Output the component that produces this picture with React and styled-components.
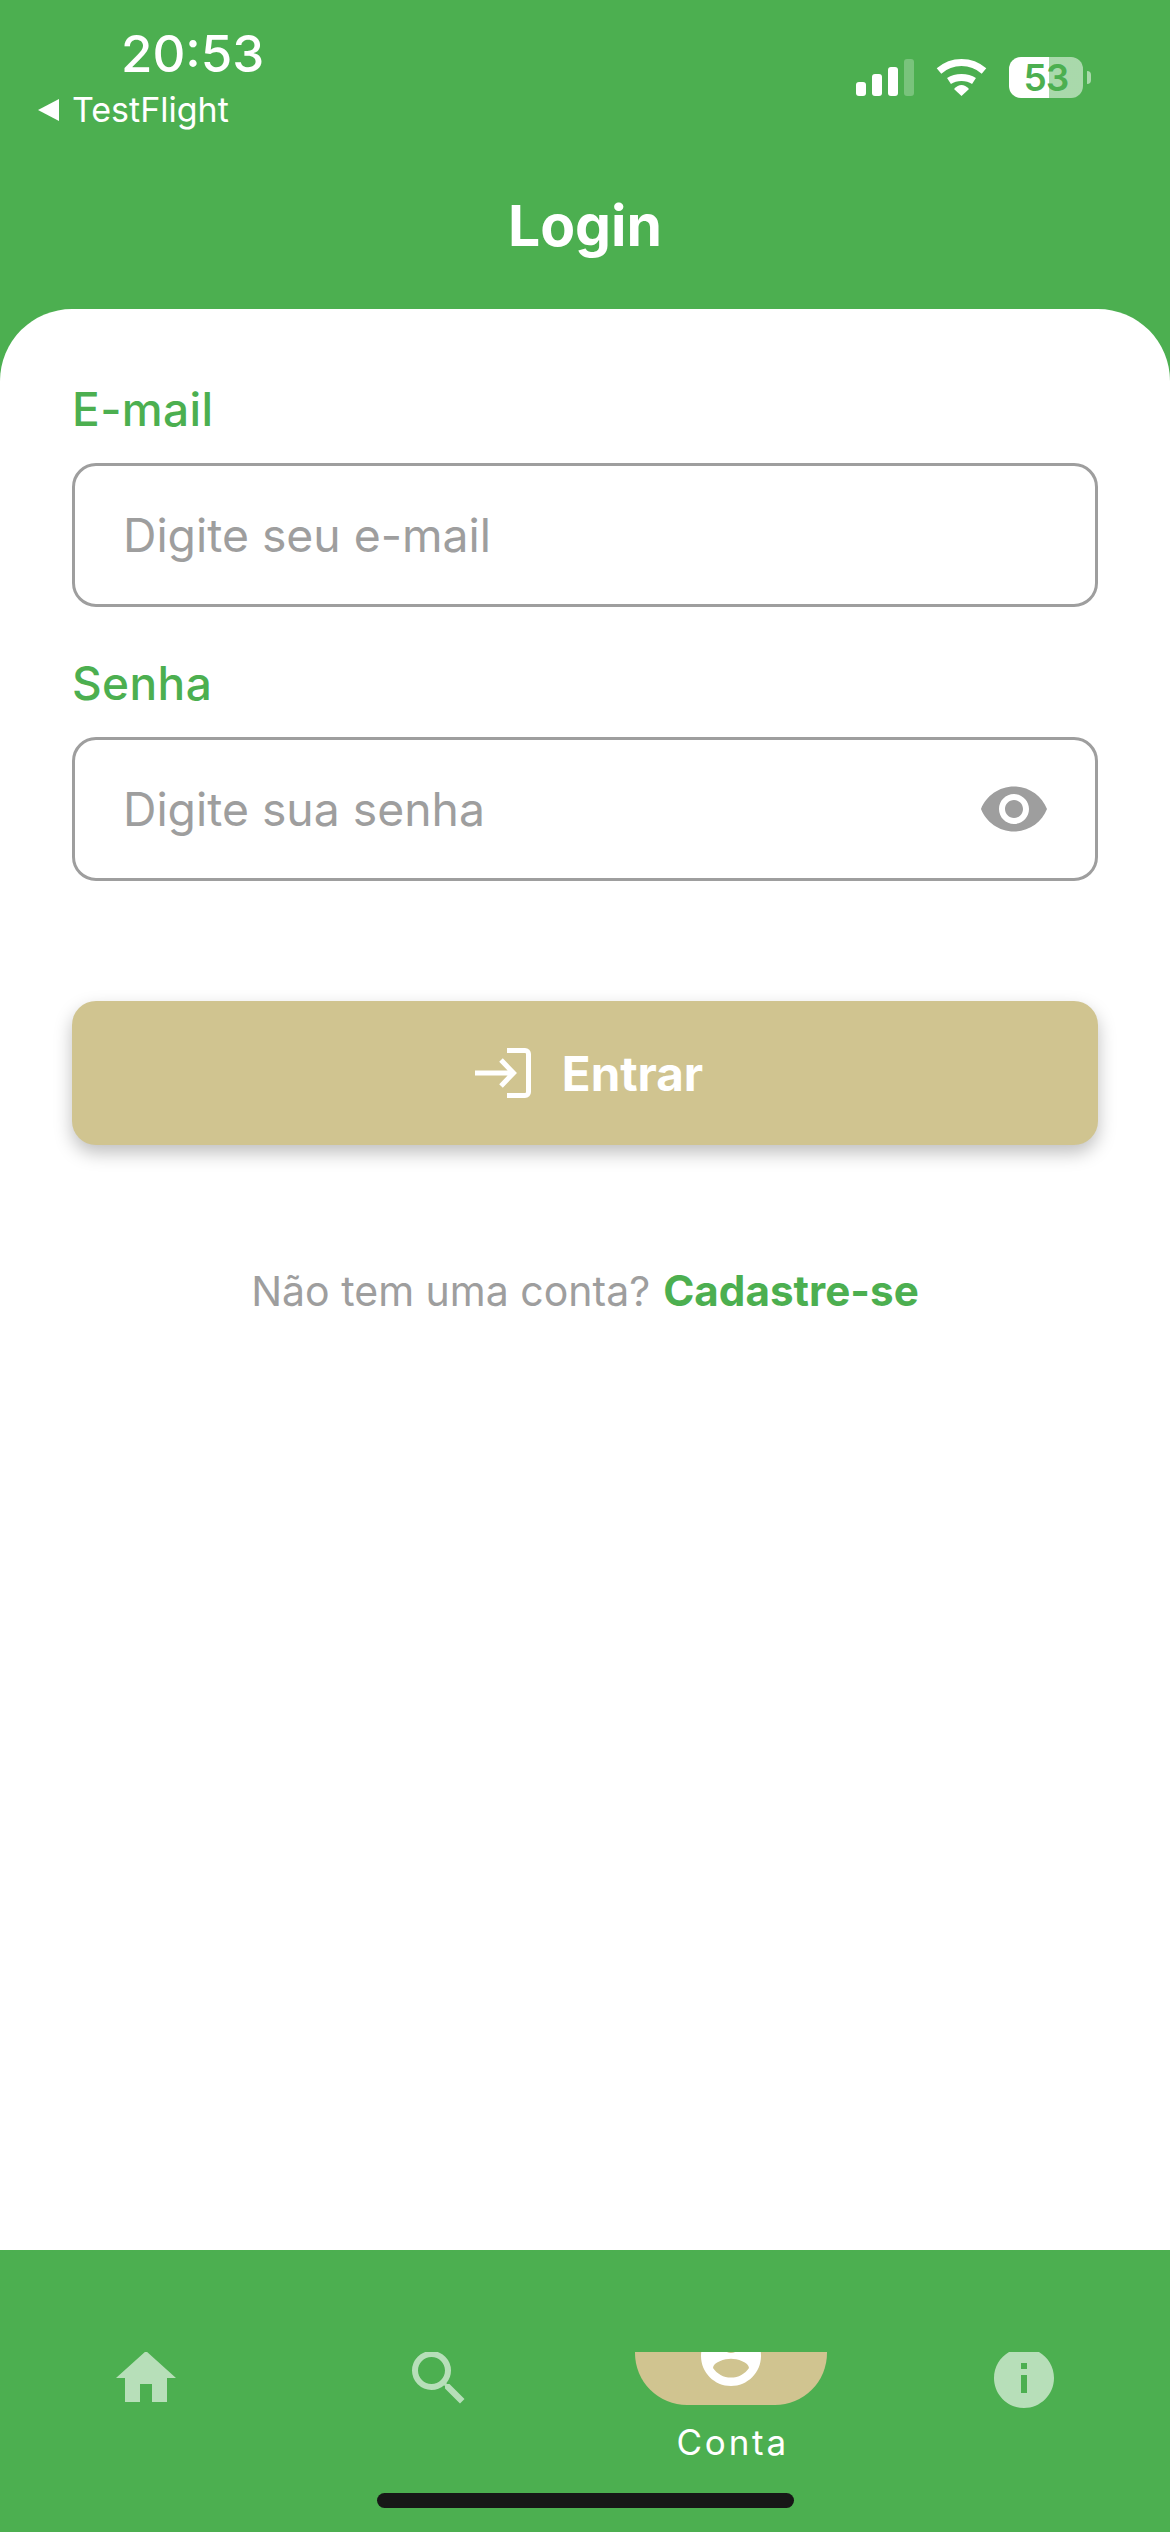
import React from 'react'
import styled, { createGlobalStyle } from 'styled-components'
import { MdHome, MdSearch, MdInfo, MdVisibility } from 'react-icons/md'

const GREEN = '#4caf50'
const TAN = '#d0c490'
const GREY = '#9e9e9e'
const FAINT = 'rgba(255, 255, 255, 0.6)'

const GlobalStyle = createGlobalStyle`
  html, body {
    margin: 0;
    padding: 0;
    background: #fff;
  }
  * {
    box-sizing: border-box;
  }
`

const Page = styled.div`
  width: 1170px;
  height: 2532px;
  display: flex;
  flex-direction: column;
  overflow: hidden;
  background: ${GREEN};
  font-family: Inter, 'Liberation Sans', sans-serif;
  color: #fff;
`

const StatusBar = styled.div`
  height: 190px;
  display: flex;
  justify-content: space-between;
  align-items: flex-start;
  padding: 0 79px 0 38px;
`

const StatusLeft = styled.div`
  padding-top: 24px;
  display: flex;
  flex-direction: column;
`

const Time = styled.div`
  margin-left: 83px;
  font-size: 51px;
  line-height: 60px;
  font-weight: 500;
`

const BackLink = styled.div`
  display: flex;
  align-items: center;
  gap: 13px;
  margin-top: 6px;
  font-size: 34px;
  line-height: 40px;
`

const BackArrow = styled.svg`
  width: 21px;
  height: 22px;
  fill: #fff;
`

const StatusRight = styled.div`
  padding-top: 57px;
  display: flex;
  align-items: flex-end;
`

const Signal = styled.div`
  display: flex;
  align-items: flex-end;
  gap: 6px;
  height: 37px;
  margin: 0 22px 2px 0;
`

const SignalBar = styled.div`
  width: 10px;
  height: ${(p) => p.$h}px;
  border-radius: 3px;
  background: ${(p) => (p.$off ? 'rgba(255,255,255,0.25)' : '#fff')};
`

const Wifi = styled.svg`
  width: 51px;
  height: 37px;
  margin: 0 22px 2px 0;
`

const Battery = styled.div`
  width: 74px;
  height: 41px;
  border-radius: 12px;
  background: linear-gradient(to right, #fff 54%, rgba(255, 255, 255, 0.52) 54%);
  color: ${GREEN};
  font-size: 37px;
  font-weight: 600;
  letter-spacing: -1px;
  line-height: 41px;
  text-align: center;
`

const BatteryTip = styled.div`
  width: 4px;
  height: 13px;
  margin: 0 0 14px 4px;
  border-radius: 0 4px 4px 0;
  background: rgba(255, 255, 255, 0.52);
`

const Header = styled.h1`
  margin: 0;
  height: 119px;
  font-size: 57px;
  line-height: 72px;
  font-weight: 700;
  text-align: center;
`

const Card = styled.main`
  flex: 1;
  display: flex;
  flex-direction: column;
  padding: 70px 72px 0;
  background: #fff;
  border-radius: 72px 72px 0 0;
`

const Label = styled.label`
  display: block;
  color: ${GREEN};
  font-size: 46px;
  letter-spacing: 0.4px;
  line-height: 60px;
  font-weight: 500;
  margin-bottom: 24px;
`

const FieldBox = styled.div`
  height: 144px;
  display: flex;
  align-items: center;
  padding: 0 48px 0 48px;
  margin-bottom: 46px;
  border: 3px solid ${GREY};
  border-radius: 24px;
`

const FieldInput = styled.input`
  flex: 1;
  min-width: 0;
  border: none;
  outline: none;
  background: none;
  padding: 0;
  font: 400 46.3px Inter, 'Liberation Sans', sans-serif;
  color: #333;

  &::placeholder {
    color: ${GREY};
    opacity: 1;
  }
`

const EyeButton = styled.span`
  display: flex;
  color: ${GREY};
  font-size: 72px;
  margin-right: -3px;
`

const LoginButton = styled.button`
  height: 144px;
  margin-top: 74px;
  padding: 0 0 0 8px;
  display: flex;
  align-items: center;
  justify-content: center;
  gap: 31px;
  border: none;
  border-radius: 24px;
  background: ${TAN};
  color: #fff;
  font: 700 47.5px Inter, 'Liberation Sans', sans-serif;
  box-shadow: 0 8px 18px rgba(0, 0, 0, 0.25);
`

const LoginIcon = styled.svg`
  width: 56px;
  height: 50px;
`

const SignupRow = styled.div`
  margin-top: 116px;
  text-align: center;
  color: ${GREY};
  font-size: 41px;
  line-height: 60px;
`

const SignupLink = styled.span`
  margin-left: 13px;
  color: ${GREEN};
  font-size: 42.2px;
  font-weight: 700;
`

const TabBar = styled.nav`
  position: relative;
  height: 282px;
  flex: none;
  display: grid;
  grid-template-columns: repeat(4, 1fr);
  align-items: start;
  padding-top: 102px;
`

const Tab = styled.div`
  height: 120px;
  display: flex;
  flex-direction: column;
  align-items: center;
  overflow: hidden;
`

const TabIcon = styled.span`
  display: flex;
  margin-top: -10px;
  font-size: 72px;
  color: ${FAINT};
`

const ActivePill = styled.div`
  flex: none;
  width: 192px;
  height: 53px;
  display: flex;
  justify-content: center;
  overflow: hidden;
  border-radius: 0 0 52px 52px;
  background: ${TAN};
`

const AccountIcon = styled.svg`
  flex: none;
  width: 72px;
  height: 72px;
  margin-top: -32px;
  fill: #fff;
`

const TabLabel = styled.div`
  margin: 14px 0 0 3px;
  font-size: 35px;
  line-height: 46px;
  letter-spacing: 2.8px;
`

const HomeIndicator = styled.div`
  position: absolute;
  left: 377px;
  bottom: 24px;
  width: 417px;
  height: 15px;
  border-radius: 8px;
  background: #171717;
`

function StatusIcons() {
  return (
    <StatusRight>
      <Signal>
        <SignalBar $h={14} />
        <SignalBar $h={22} />
        <SignalBar $h={29} />
        <SignalBar $h={37} $off />
      </Signal>
      <Wifi viewBox="0 0 51 37" fill="none">
        <path d="M3 12C16 0.7 35 0.7 48 12" stroke="#fff" strokeWidth="7" />
        <path d="M13 22C20 17.3 31 17.3 38 22" stroke="#fff" strokeWidth="7" />
        <path d="M18 30Q25.5 22 33 30L25.5 37Z" fill="#fff" />
      </Wifi>
      <Battery>53</Battery>
      <BatteryTip />
    </StatusRight>
  )
}

function App() {
  return (
    <Page>
      <GlobalStyle />
      <StatusBar>
        <StatusLeft>
          <Time>20:53</Time>
          <BackLink>
            <BackArrow viewBox="0 0 21 22">
              <path d="M21 0V22L0 11Z" />
            </BackArrow>
            TestFlight
          </BackLink>
        </StatusLeft>
        <StatusIcons />
      </StatusBar>
      <Header>Login</Header>
      <Card>
        <Label>E-mail</Label>
        <FieldBox>
          <FieldInput placeholder="Digite seu e-mail" />
        </FieldBox>
        <Label>Senha</Label>
        <FieldBox>
          <FieldInput placeholder="Digite sua senha" />
          <EyeButton>
            <MdVisibility />
          </EyeButton>
        </FieldBox>
        <LoginButton>
          <LoginIcon viewBox="0 0 56 50" fill="none" stroke="#fff" strokeWidth="5">
            <path d="M0 25H38M26 12L38.5 25L26 38" />
            <path d="M32 2.5H50C52 2.5 53.5 4 53.5 6V44C53.5 46 52 47.5 50 47.5H32" />
          </LoginIcon>
          Entrar
        </LoginButton>
        <SignupRow>
          Não tem uma conta?<SignupLink>Cadastre-se</SignupLink>
        </SignupRow>
      </Card>
      <TabBar>
        <Tab>
          <TabIcon>
            <MdHome />
          </TabIcon>
        </Tab>
        <Tab>
          <TabIcon>
            <MdSearch />
          </TabIcon>
        </Tab>
        <Tab>
          <ActivePill>
            <AccountIcon viewBox="0 0 24 24">
              <path d="M12 2C6.48 2 2 6.48 2 12s4.48 10 10 10 10-4.48 10-10S17.52 2 12 2zm0 3c1.66 0 3 1.34 3 3s-1.34 3-3 3-3-1.34-3-3 1.34-3 3-3zm0 14.2c-2.5 0-4.71-1.28-6-3.22.03-1.99 4-3.08 6-3.08 1.99 0 5.97 1.09 6 3.08-1.29 1.94-3.5 3.22-6 3.22z" />
            </AccountIcon>
          </ActivePill>
          <TabLabel>Conta</TabLabel>
        </Tab>
        <Tab>
          <TabIcon>
            <MdInfo />
          </TabIcon>
        </Tab>
        <HomeIndicator />
      </TabBar>
    </Page>
  )
}

export default App
